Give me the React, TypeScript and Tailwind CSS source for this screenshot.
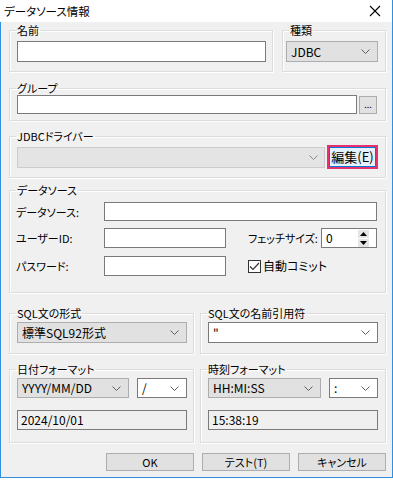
import React from "react";

const font = "font-['Noto_Sans_CJK_JP','Noto_Sans',sans-serif] [font-feature-settings:'palt']";

function Chevron({ color = "#606060" }: { color?: string }) {
  return (
    <svg width="9" height="5" viewBox="0 0 9 5" className="shrink-0">
      <path d="M0.5 0.5 L4.5 4.5 L8.5 0.5" fill="none" stroke={color} strokeWidth="1" />
    </svg>
  );
}

function Group({
  label,
  className = "",
  inner = "",
  children,
}: {
  label: string;
  className?: string;
  inner?: string;
  children: React.ReactNode;
}) {
  return (
    <fieldset
      className={`border border-[#dcdcdc] shadow-[inset_1px_1px_0_#ffffff,1px_1px_0_#ffffff] ${className}`}
    >
      <legend className="ml-[6px] px-[1px] text-[11px] leading-[14px] text-black">{label}</legend>
      <div className={inner}>{children}</div>
    </fieldset>
  );
}

function Select({
  value,
  white,
  className = "",
}: {
  value: string;
  white?: boolean;
  className?: string;
}) {
  return (
    <div
      className={`flex items-center justify-between pl-[4px] pr-[7px] border leading-[14px] ${
        white ? "bg-white border-[#7a7a7a]" : "bg-[#e1e1e1] border-[#adadad]"
      } ${className}`}
    >
      <span className="whitespace-nowrap">{value}</span>
      <Chevron />
    </div>
  );
}

function Input({ className = "", children }: { className?: string; children?: React.ReactNode }) {
  return (
    <div className={`flex items-center bg-white border border-[#7a7a7a] pl-[4px] text-[12px] leading-[14px] ${className}`}>
      {children}
    </div>
  );
}

function Display({ value, className = "" }: { value: string; className?: string }) {
  return (
    <div className={`flex items-center bg-[#f0f0f0] border border-[#7a7a7a] pl-[3px] text-[12px] leading-[14px] ${className}`}>
      {value}
    </div>
  );
}

export default function App() {
  return (
    <div className={`w-[393px] h-[480px] bg-white text-black ${font}`}>
      <div className="h-[22px] flex items-center justify-between pl-[4px] pr-[11px] bg-white border-r border-[#2f8fe0]">
        <span className="text-[11.5px] leading-[14px]">データソース情報</span>
        <svg width="12" height="12" viewBox="0 0 12 12">
          <path d="M1 1 L11 11 M11 1 L1 11" stroke="#000" strokeWidth="1.1" />
        </svg>
      </div>

      <div className="h-[456px] bg-[#f0f0f0] border-l border-r border-b border-[#2f8fe0] pl-[8px] pr-[6px] pt-[1px]">
        {/* 名前 / 種類 */}
        <div className="flex gap-[9px]">
          <Group label="名前" className="w-[264px]" inner="pl-[7px] pr-[6px] pb-[9px]">
            <Input className="mt-[4px] h-[21px]" />
          </Group>
          <Group label="種類" className="w-[104px]" inner="pl-[3px] pr-[7px] pb-[9px]">
            <Select value="JDBC" className="mt-[4px] h-[21px] text-[12px]" />
          </Group>
        </div>

        {/* グループ */}
        <Group label="グループ" className="mt-[9px] w-[377px]" inner="pl-[7px] pr-[8px] pb-[6px]">
          <div className="flex items-end gap-[2px]">
            <Input className="h-[19px] flex-1" />
            <div className="w-[18px] h-[18px] bg-[#e1e1e1] border border-[#adadad] flex items-end justify-center pb-[4px] text-[9px] leading-[9px]">
              ...
            </div>
          </div>
        </Group>

        {/* JDBCドライバー */}
        <Group label="JDBCドライバー" className="mt-[8px] w-[377px]" inner="pl-[7px] pr-[7px] pb-[8px]">
          <div className="flex items-center gap-[2px] mt-[2px]">
            <div className="flex-1 h-[21px] bg-[#e4e4e4] border border-[#cccccc] flex items-center justify-end pr-[6px]">
              <Chevron color="#8a8a8a" />
            </div>
            <div className="w-[51px] h-[24px] border-2 border-[#e8306e]">
              <div className="w-full h-full border border-[#0078d7] bg-[#e5f1fb] flex items-center justify-center text-[13px] leading-[16px]">
                編集(E)
              </div>
            </div>
          </div>
        </Group>

        {/* データソース */}
        <Group label="データソース" className="mt-[5px] w-[377px]" inner="pl-[6px] pr-[8px] pb-[16px]">
          <div className="flex items-center mt-[5px] text-[11px] leading-[14px]">
            <span className="w-[88px] whitespace-nowrap">データソース:</span>
            <Input className="h-[19px] flex-1" />
          </div>
          <div className="flex items-center mt-[7px] text-[11px] leading-[14px]">
            <span className="w-[88px] whitespace-nowrap">ユーザーID:</span>
            <Input className="h-[20px] w-[122px]" />
            <span className="ml-[22px] w-[73px] whitespace-nowrap">フェッチサイズ:</span>
            <Input className="h-[20px] flex-1 justify-between pr-[7px]">
              <span>0</span>
              <div className="flex flex-col gap-[1px]">
                <div className="w-[11px] h-[8px] bg-[#e5e5e5] flex items-center justify-center">
                  <svg width="7" height="4" viewBox="0 0 7 4">
                    <path d="M0 4 L3.5 0 L7 4 Z" fill="#000" />
                  </svg>
                </div>
                <div className="w-[11px] h-[8px] bg-[#e5e5e5] flex items-center justify-center">
                  <svg width="7" height="4" viewBox="0 0 7 4">
                    <path d="M0 0 L3.5 4 L7 0 Z" fill="#000" />
                  </svg>
                </div>
              </div>
            </Input>
          </div>
          <div className="flex items-center mt-[8px] text-[11px] leading-[14px]">
            <span className="w-[88px] whitespace-nowrap">パスワード:</span>
            <Input className="h-[20px] w-[122px]" />
            <div className="ml-[22px] flex items-center gap-[2px]">
              <div className="w-[13px] h-[13px] bg-white border border-[#333333] flex items-center justify-center">
                <svg width="11" height="9" viewBox="0 0 11 9">
                  <path d="M1 4.5 L4 7.5 L10 1" fill="none" stroke="#333" strokeWidth="1.2" />
                </svg>
              </div>
              <span className="text-[12px]">自動コミット</span>
            </div>
          </div>
        </Group>

        {/* SQL */}
        <div className="flex gap-[6px] mt-[13px]">
          <Group label="SQL文の形式" className="w-[185px]" inner="pl-[7px] pr-[6px] pb-[10px]">
            <Select value="標準SQL92形式" className="mt-[2px] h-[21px] text-[12px]" />
          </Group>
          <Group label="SQL文の名前引用符" className="w-[186px]" inner="pl-[7px] pr-[7px] pb-[10px]">
            <Select value={'"'} white className="mt-[2px] h-[21px] text-[12px]" />
          </Group>
        </div>

        {/* 日付 / 時刻 */}
        <div className="flex gap-[6px] mt-[8px]">
          <Group label="日付フォーマット" className="w-[185px]" inner="pl-[7px] pr-[6px] pb-[12px]">
            <div className="flex gap-[8px] mt-[2px]">
              <Select value="YYYY/MM/DD" className="h-[20px] w-[112px] text-[12px]" />
              <Select value="/" white className="h-[20px] flex-1 text-[12px]" />
            </div>
            <Display value="2024/10/01" className="mt-[12px] h-[20px]" />
          </Group>
          <Group label="時刻フォーマット" className="w-[186px]" inner="pl-[7px] pr-[7px] pb-[12px]">
            <div className="flex gap-[8px] mt-[2px]">
              <Select value="HH:MI:SS" className="h-[20px] w-[113px] text-[12px]" />
              <Select value=":" white className="h-[20px] flex-1 text-[12px]" />
            </div>
            <Display value="15:38:19" className="mt-[12px] h-[20px]" />
          </Group>
        </div>

        {/* Buttons */}
        <div className="flex justify-end gap-[8px] mt-[10px] text-[11px]">
          {["OK", "テスト(T)", "キャンセル"].map((b) => (
            <div
              key={b}
              className="w-[88px] h-[18px] bg-[#e1e1e1] border border-[#adadad] flex items-center justify-center leading-[14px]"
            >
              {b}
            </div>
          ))}
        </div>
      </div>
    </div>
  );
}
